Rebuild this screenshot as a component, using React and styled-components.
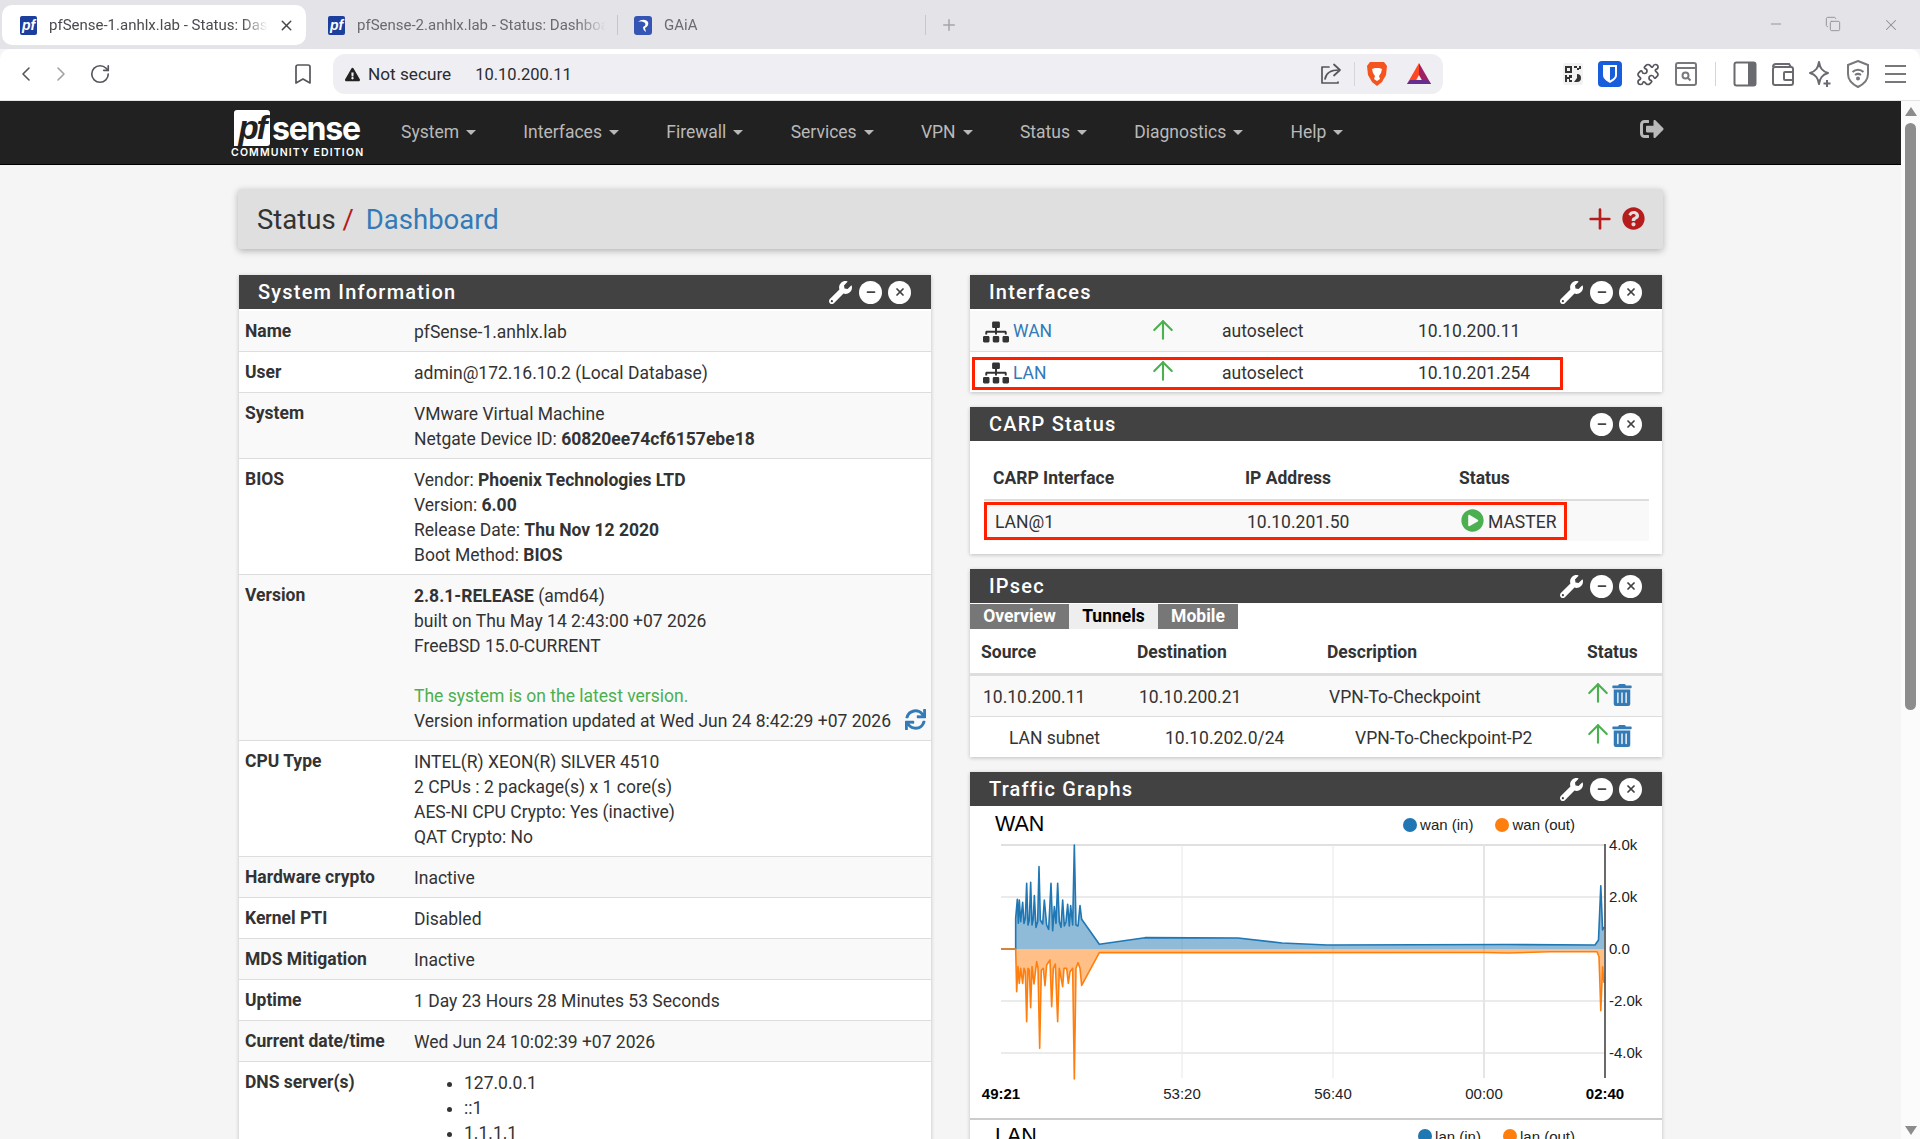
import React from 'react';
import styled, { createGlobalStyle } from 'styled-components';
import {
  ChevronLeft, ChevronRight, RotateCw, Bookmark, Puzzle, Plus, X, Minus, Copy, ArrowUp,
} from 'lucide-react';
import {
  FaWrench, FaSitemap, FaPlayCircle, FaTrashAlt, FaSync,
  FaSignOutAlt, FaQuestionCircle, FaExclamationTriangle,
} from 'react-icons/fa';

const GlobalStyle = createGlobalStyle`
  html, body {
    margin: 0;
    padding: 0;
    height: 100%;
    overflow: hidden;
    background: #f5f5f5;
  }
  * { box-sizing: border-box; }
  body {
    font-family: Roboto, "Liberation Sans", sans-serif;
    font-size: 17.5px;
    line-height: 25px;
    color: #333;
  }
`;

const Window = styled.div`
  width: 1920px;
  height: 1139px;
  display: flex;
  flex-direction: column;
  overflow: hidden;
`;

/* browser chrome */
const TabStrip = styled.div`
  height: 49px;
  flex: none;
  background: #e3e3e8;
  display: flex;
  align-items: flex-start;
  padding: 5px 0 0 2px;
  font-size: 15px;
  color: #6a6b70;
`;

const Tab = styled.div`
  width: ${(p) => p.$w}px;
  height: 40px;
  flex: none;
  display: flex;
  align-items: center;
  position: relative;
  padding-left: ${(p) => p.$pad}px;
  padding-right: ${(p) => p.$padR || 0}px;
  gap: 12px;
  background: ${(p) => (p.$active ? '#fff' : 'transparent')};
  color: ${(p) => (p.$active ? '#4a4b50' : 'inherit')};
  border-radius: ${(p) => (p.$active ? '10px' : '0')};
  &::after {
    content: '';
    display: ${(p) => (p.$sep ? 'block' : 'none')};
    position: absolute;
    right: 0;
    top: 10px;
    width: 1px;
    height: 20px;
    background: #c6c6cc;
  }
`;

const TabLabel = styled.span`
  flex: 1;
  min-width: 0;
  white-space: nowrap;
  overflow: hidden;
  -webkit-mask-image: linear-gradient(to right, #000 88%, transparent 100%);
  mask-image: linear-gradient(to right, #000 88%, transparent 100%);
`;

const Favicon = styled.span`
  width: 17px;
  height: 19px;
  flex: none;
  background: #1c3f9e;
  color: #fff;
  border-radius: 2px;
  font: italic 700 14px/18px "Liberation Sans", sans-serif;
  text-align: center;
`;

const TabClose = styled(X)`
  margin: 0 11px 0 -2px;
  flex: none;
  color: #44454a;
`;

const NewTab = styled(Plus)`
  margin-left: 14px;
  margin-top: 11px;
  color: #a5a5ab;
  flex: none;
`;

const WindowControls = styled.div`
  margin-left: auto;
  display: flex;
  gap: 41px;
  padding: 11px 20px 0 0;
  color: #8f8f94;
`;

const Toolbar = styled.div`
  height: 52px;
  flex: none;
  background: #fff;
  border-radius: 10px 10px 0 0;
  border-bottom: 1px solid #e4e4e6;
  display: flex;
  align-items: center;
  padding: 0 14px 1px 14px;
  color: #55565c;
`;

const ToolIcon = styled.span`
  display: flex;
  width: ${(p) => p.$w || 24}px;
  margin-left: ${(p) => p.$ml || 0}px;
  justify-content: center;
  color: ${(p) => p.$color || 'inherit'};
  flex: none;
`;

const UrlBar = styled.div`
  width: 1110px;
  height: 40px;
  margin-left: 18px;
  margin-right: 118px;
  background: #eeeef3;
  border-radius: 12px;
  display: flex;
  align-items: center;
  padding: 0 12px 0 12px;
  font-size: 16.5px;
  color: #2b2b30;
  flex: none;
`;

const UrlHost = styled.span`
  margin-left: 24px;
  margin-top: 1px;
`;

const SecureText = styled.span`
  margin-left: 8px;
  margin-top: 1px;
  font-size: 17.2px;
`;

const UrlActions = styled.div`
  margin-left: auto;
  display: flex;
  align-items: center;
  gap: 11px;
`;

const ToolSep = styled.span`
  width: 1px;
  height: 24px;
  background: #d6d6da;
  margin: 0 ${(p) => p.$m || 0}px;
  flex: none;
`;

const QrBox = styled.span`
  width: 20px;
  height: 22px;
  display: flex;
  align-items: center;
  justify-content: center;
  background: #f2f2f2;
  border-radius: 2px;
`;

const HamburgerLines = styled.span`
  width: 21px;
  height: 18px;
  border-top: 2px solid #77787c;
  border-bottom: 2px solid #77787c;
  position: relative;
  &::after {
    content: '';
    position: absolute;
    left: 0;
    right: 0;
    top: 6px;
    height: 2px;
    background: #77787c;
  }
`;

/* page */
const Viewport = styled.div`
  flex: 1;
  min-height: 0;
  display: flex;
`;

const Page = styled.div`
  flex: 1;
  min-width: 0;
  overflow: hidden;
  background: #f5f5f5;
`;

const ScrollTrack = styled.div`
  width: 19px;
  flex: none;
  background: #fbfbfb;
  display: flex;
  flex-direction: column;
  align-items: center;
  padding: 6px 0 4px;
`;

const ScrollThumb = styled.div`
  width: 11px;
  height: 587px;
  margin-top: 7px;
  background: #8c8c8c;
  border-radius: 6px;
`;

const ScrollArrow = styled.div`
  width: 0;
  height: 0;
  border-left: 6.5px solid transparent;
  border-right: 6.5px solid transparent;
  border-${(p) => (p.$down ? 'top' : 'bottom')}: 9px solid #8c8c8c;
  margin-top: ${(p) => (p.$down ? 'auto' : '0')};
`;

const NavBar = styled.nav`
  height: 64px;
  background: #212121;
  border-bottom: 1px solid #000;
  display: flex;
  align-items: center;
  padding: 0 237px 0 232px;
  color: #b9b9b9;
`;

const Brand = styled.div`
  width: 131px;
  height: 56px;
  flex: none;
  margin-right: 38px;
  display: flex;
  flex-direction: column;
  color: #fff;
  margin-top: 6px;
`;

const BrandTop = styled.div`
  display: flex;
  align-items: flex-end;
  height: 38px;
  padding-left: 2px;
`;

const PfBox = styled.span`
  width: 36px;
  height: 36px;
  background: #fff;
  border-radius: 3px 3px 3px 0;
  color: #212121;
  font: italic 700 33px/36px "Liberation Sans", sans-serif;
  text-align: center;
  letter-spacing: -2px;
  flex: none;
`;

const SenseWord = styled.span`
  font: 700 32px/34px Inter, "Liberation Sans", sans-serif;
  letter-spacing: -1.2px;
  margin-left: 2px;
`;

const BrandSub = styled.div`
  font: 600 10.5px/12px Inter, "Liberation Sans", sans-serif;
  letter-spacing: 1.15px;
  margin: 1px 0 0 -1px;
  white-space: nowrap;
`;

const NavList = styled.div`
  display: flex;
  gap: 47.3px;
  align-items: center;
  margin-top: -1px;
`;

const NavItem = styled.span`
  display: flex;
  align-items: center;
  gap: 6px;
  white-space: nowrap;
`;

const Caret = styled.span`
  width: 0;
  height: 0;
  margin-left: 1px;
  border-left: 5px solid transparent;
  border-right: 5px solid transparent;
  border-top: 5px solid #b9b9b9;
`;

const Logout = styled(FaSignOutAlt)`
  margin-left: auto;
  margin-bottom: 7px;
`;

const Container = styled.div`
  width: 1425px;
  margin-left: 238px;
  padding-top: 24px;
`;

const TitleBar = styled.div`
  height: 60px;
  background: #dfdfdf;
  border-radius: 3px;
  box-shadow: 0 2px 7px rgba(0, 0, 0, 0.28);
  display: flex;
  align-items: center;
  padding: 0 18px 0 19px;
  font-size: 27.5px;
  margin-bottom: 26px;
`;

const Crumb = styled.span`
  color: ${(p) => p.$color || '#333'};
  margin-right: ${(p) => p.$mr || 0}px;
`;

const TitleActions = styled.div`
  margin-left: auto;
  display: flex;
  align-items: center;
  gap: 12px;
  padding-bottom: 1px;
  color: #b71c1c;
`;

const AddIcon = styled(Plus)`
  margin: -6px;
`;

const Columns = styled.div`
  display: flex;
  justify-content: space-between;
  padding: 0 1px;
  align-items: flex-start;
`;

const Column = styled.div`
  width: 692px;
  display: flex;
  flex-direction: column;
  gap: 15px;
`;

const Panel = styled.section`
  background: #fff;
  box-shadow: 0 1px 4px rgba(0, 0, 0, 0.22);
`;

const PanelHead = styled.header`
  height: 34px;
  background: #424242;
  color: #fff;
  display: flex;
  align-items: center;
  padding: 0 20px 0 19px;
  margin-bottom: ${(p) => p.$mb ?? 2}px;
`;

const PanelTitle = styled.h2`
  margin: 0;
  font-size: 20px;
  font-weight: 500;
  letter-spacing: 1.2px;
  line-height: 34px;
`;

const PanelTools = styled.div`
  margin-left: auto;
  display: flex;
  align-items: center;
  gap: 6px;
`;

const WrenchIcon = styled(FaWrench)`
  margin-right: 1px;
`;

const ToolCircle = styled.span`
  width: 23px;
  height: 23px;
  border-radius: 50%;
  background: #fff;
  color: #424242;
  display: flex;
  align-items: center;
  justify-content: center;
`;

const InfoRow = styled.div`
  display: grid;
  grid-template-columns: 169px 1fr;
  padding: 9px 5px 6px 6px;
  border-bottom: 1px solid #ddd;
  background: ${(p) => (p.$odd ? '#f9f9f9' : '#fff')};
`;

const InfoLabel = styled.div`
  font-weight: 700;
  white-space: nowrap;
  margin-top: -1px;
`;

const UpdatedLine = styled.div`
  display: flex;
  justify-content: space-between;
  align-items: center;
  white-space: nowrap;
`;

const RefreshIcon = styled(FaSync)`
  color: #337ab7;
  margin-top: -5px;
`;

const Green = styled.div`
  color: #4caf50;
`;

const DnsList = styled.ul`
  margin: 0;
  padding-left: 50px;
`;

const IfaceRow = styled.div`
  display: grid;
  grid-template-columns: 171px 68px 196px 1fr;
  height: ${(p) => (p.$last ? 40 : 41)}px;
  align-items: center;
  padding: ${(p) => (p.$last ? 2 : 1)}px 0 0 13px;
  position: relative;
  border-bottom: ${(p) => (p.$last ? 'none' : '1px solid #ddd')};
  background: ${(p) => (p.$odd ? '#f9f9f9' : '#fff')};
`;

const IfaceName = styled.div`
  display: flex;
  align-items: center;
  gap: 4px;
  color: #337ab7;
`;

/* lucide's arrow leaves a wide margin inside its box, so it is drawn large and pulled in */
const UpArrow = styled(ArrowUp)`
  color: #4caf50;
  display: block;
  margin: -4px -6px 0;
`;

const RedMark = styled.div`
  position: absolute;
  border: 3px solid #ff2000;
  pointer-events: none;
  left: ${(p) => p.$l}px;
  top: ${(p) => p.$t}px;
  width: ${(p) => p.$w}px;
  height: ${(p) => p.$h}px;
`;

const CarpBody = styled.div`
  padding: 17px 13px 13px 14px;
`;

const CarpGrid = styled.div`
  display: grid;
  grid-template-columns: 252px 214px 1fr;
  align-items: center;
  height: ${(p) => p.$h}px;
  padding: ${(p) => (p.$head ? 0 : 2)}px 0 0 ${(p) => p.$pl}px;
  position: relative;
  font-weight: ${(p) => (p.$head ? 700 : 400)};
  border-bottom: ${(p) => (p.$head ? '2px solid #ddd' : 'none')};
  background: ${(p) => (p.$head ? '#fff' : '#f9f9f9')};
`;

const MasterCell = styled.div`
  display: flex;
  align-items: center;
  gap: 4px;
`;

const PlayIcon = styled(FaPlayCircle)`
  color: #4caf50;
  margin-top: -3px;
`;

const TabRow = styled.div`
  display: flex;
  height: 25px;
  font-weight: 700;
`;

const WidgetTab = styled.div`
  width: ${(p) => p.$w}px;
  text-align: center;
  background: ${(p) => (p.$active ? '#eee' : '#777')};
  color: ${(p) => (p.$active ? '#000' : '#fff')};
`;

const TunnelHead = styled.div`
  display: grid;
  grid-template-columns: 156px 190px 260px 1fr;
  height: 47px;
  align-items: center;
  padding: 2px 0 0 11px;
  font-weight: 700;
  border-bottom: 3px solid #ddd;
`;

const TunnelRow = styled.div`
  display: grid;
  grid-template-columns: 156px 190px 260px 1fr;
  height: ${(p) => (p.$last ? 40 : 41)}px;
  align-items: center;
  padding: 2px 0 0 ${(p) => (p.$indent ? 39 : 13)}px;
  border-bottom: ${(p) => (p.$last ? 'none' : '1px solid #ddd')};
  background: ${(p) => (p.$odd ? '#f9f9f9' : '#fff')};
`;

const StatusIcons = styled.div`
  display: flex;
  align-items: center;
  gap: 4px;
  margin-left: ${(p) => (p.$indent ? -26 : 0)}px;
  margin-top: -4px;
  color: #337ab7;
`;

const GraphHead = styled.div`
  display: flex;
  align-items: center;
  height: 32px;
  padding: ${(p) => p.$pt || 0}px 0 0 25px;
  font-family: "Liberation Sans", Arial, sans-serif;
  color: #000;
`;

const GraphName = styled.span`
  font-size: 21.5px;
`;

const Legend = styled.div`
  margin-left: auto;
  margin-right: 87px;
  display: flex;
  gap: 22px;
  font-size: 15px;
  color: #222;
`;

const LegendItem = styled.span`
  display: flex;
  align-items: center;
  gap: 3px;
  &::before {
    content: '';
    width: 14px;
    height: 14px;
    border-radius: 50%;
    background: ${(p) => p.$color};
  }
`;

const GraphSvg = styled.svg`
  display: block;
`;

const GraphDivider = styled.div`
  height: 2px;
  background: #ccc;
`;

/* hand-read from the reference, [x, y] in page pixels after scaling down the crop */
const crop = (pts) => pts.map(([x, y]) => [1000 + x / 3, 840 + y / 3]);

const blue = [
  [1001, 949], [1015.5, 949],
  ...crop([[47, 327], [47, 235], [52, 178], [55, 250], [58, 180], [62, 245], [68, 187], [72, 250], [76, 235], [80, 130], [84, 255], [88, 240], [92, 127], [96, 255], [100, 235], [103, 167], [108, 262], [113, 245], [117, 80], [121, 240], [128, 252], [133, 180], [140, 255], [146, 268], [153, 130], [158, 272], [163, 200], [168, 250], [173, 130], [178, 245], [183, 262], [188, 180], [193, 258], [198, 245], [203, 193], [208, 258], [212, 197], [218, 255], [223, 15], [228, 255], [234, 258], [240, 197], [245, 238], [298, 313], [435, 293]]),
  [1238, 938], [1282, 943], [1327, 945], [1506, 944.5], [1595, 945], [1598.5, 940], [1600.8, 885.7], [1602.6, 930], [1604, 927],
];

const orange = [
  [1001, 949], [1015.5, 949],
  ...crop([[47, 327], [50, 455], [54, 380], [58, 430], [62, 385], [68, 430], [72, 385], [76, 395], [80, 545], [84, 385], [88, 390], [92, 503], [96, 380], [102, 432], [110, 365], [114, 385], [119, 625], [124, 390], [130, 385], [135, 437], [140, 375], [150, 360], [155, 500], [160, 385], [166, 372], [173, 545], [178, 385], [188, 440], [192, 385], [200, 385], [205, 430], [210, 395], [218, 385], [223, 717], [228, 385], [234, 368], [240, 385], [245, 436], [298, 338]]),
  [1483, 952.5], [1508, 953], [1550, 951.7], [1597, 951.7], [1599, 956.7], [1600.8, 1010.7], [1602.6, 966.7], [1604, 983],
];

const toPoints = (pts) => pts.map(([x, y]) => `${x},${y}`).join(' ');
const toArea = (pts) => `M${pts[0][0]},949 ${pts.map(([x, y]) => `L${x},${y}`).join(' ')} L1604,949 Z`;

const TrafficChart = () => (
  <GraphSvg width="692" height="280" viewBox="970 838 692 280">
    {[897, 1001, 1053].map((y) => (
      <line key={y} x1="1001" x2="1605" y1={y} y2={y} stroke="#e5e5e5" strokeWidth="1.3" />
    ))}
    <line x1="1001" x2="1605" y1="845" y2="845" stroke="#e0e0e0" strokeWidth="2" />
    {[1182, 1333].map((x) => (
      <line key={x} x1={x} x2={x} y1="845" y2="1078" stroke="#e8e8e8" />
    ))}
    <line x1="1484" x2="1484" y1="845" y2="1078" stroke="#e5e5e5" strokeWidth="2" />
    <path d={toArea(blue)} fill="#1f77b4" fillOpacity="0.5" />
    <path d={toArea(orange)} fill="#ff7f0e" fillOpacity="0.5" />
    <polyline points={toPoints(blue)} fill="none" stroke="#1f77b4" strokeWidth="1.6" strokeLinejoin="round" />
    <polyline points={toPoints(orange)} fill="none" stroke="#ff7f0e" strokeWidth="1.6" strokeLinejoin="round" />
    <line x1="1605" x2="1605" y1="844" y2="1078" stroke="#444" strokeWidth="1.6" />
    <g fontFamily="Liberation Sans, Arial, sans-serif" fontSize="15" fill="#222">
      <text x="1609" y="850">4.0k</text>
      <text x="1609" y="902">2.0k</text>
      <text x="1609" y="954">0.0</text>
      <text x="1609" y="1006">-2.0k</text>
      <text x="1609" y="1058">-4.0k</text>
      <text x="1182" y="1099" textAnchor="middle">53:20</text>
      <text x="1333" y="1099" textAnchor="middle">56:40</text>
      <text x="1484" y="1099" textAnchor="middle">00:00</text>
      <text x="1001" y="1099" textAnchor="middle" fontWeight="700" fill="#000">49:21</text>
      <text x="1605" y="1099" textAnchor="middle" fontWeight="700" fill="#000">02:40</text>
    </g>
  </GraphSvg>
);

const Tools = ({ wrench = true }) => (
  <PanelTools>
    {wrench && <WrenchIcon size={23} />}
    <ToolCircle><Minus size={12} strokeWidth={3.5} /></ToolCircle>
    <ToolCircle><X size={12} strokeWidth={3.5} /></ToolCircle>
  </PanelTools>
);

const systemRows = [
  { label: 'Name', value: <div>pfSense-1.anhlx.lab</div> },
  { label: 'User', value: <div>admin@172.16.10.2 (Local Database)</div> },
  {
    label: 'System',
    value: (
      <>
        <div>VMware Virtual Machine</div>
        <div>Netgate Device ID: <strong>60820ee74cf6157ebe18</strong></div>
      </>
    ),
  },
  {
    label: 'BIOS',
    value: (
      <>
        <div>Vendor: <strong>Phoenix Technologies LTD</strong></div>
        <div>Version: <strong>6.00</strong></div>
        <div>Release Date: <strong>Thu Nov 12 2020</strong></div>
        <div>Boot Method: <strong>BIOS</strong></div>
      </>
    ),
  },
  {
    label: 'Version',
    value: (
      <>
        <div><strong>2.8.1-RELEASE</strong> (amd64)</div>
        <div>built on Thu May 14 2:43:00 +07 2026</div>
        <div>FreeBSD 15.0-CURRENT</div>
        <br />
        <Green>The system is on the latest version.</Green>
        <UpdatedLine>
          Version information updated at Wed Jun 24 8:42:29 +07 2026
          <RefreshIcon size={21} />
        </UpdatedLine>
      </>
    ),
  },
  {
    label: 'CPU Type',
    value: (
      <>
        <div>INTEL(R) XEON(R) SILVER 4510</div>
        <div>2 CPUs : 2 package(s) x 1 core(s)</div>
        <div>AES-NI CPU Crypto: Yes (inactive)</div>
        <div>QAT Crypto: No</div>
      </>
    ),
  },
  { label: 'Hardware crypto', value: <div>Inactive</div> },
  { label: 'Kernel PTI', value: <div>Disabled</div> },
  { label: 'MDS Mitigation', value: <div>Inactive</div> },
  { label: 'Uptime', value: <div>1 Day 23 Hours 28 Minutes 53 Seconds</div> },
  { label: 'Current date/time', value: <div>Wed Jun 24 10:02:39 +07 2026</div> },
  {
    label: 'DNS server(s)',
    value: (
      <DnsList>
        <li>127.0.0.1</li>
        <li>::1</li>
        <li>1.1.1.1</li>
      </DnsList>
    ),
  },
];

const navItems = ['System', 'Interfaces', 'Firewall', 'Services', 'VPN', 'Status', 'Diagnostics', 'Help'];

const GaiaIcon = () => (
  <svg width="18" height="19" viewBox="0 0 18 19">
    <rect width="18" height="19" rx="3" fill="#3555b5" />
    <path d="M4 6c3-3 8-3 10 0 1 3-1 5-3 6l1 4c-2-1-3-3-3-5 2-1 3-2 2-4-1-1-4-2-7-1z" fill="#fff" />
  </svg>
);

const ShareIcon = () => (
  <svg width="24" height="24" viewBox="0 0 24 24" fill="none" stroke="#55565c" strokeWidth="1.7" strokeLinecap="round" strokeLinejoin="round">
    <path d="M10 5H3v16h16v-1" />
    <path d="M6 17c1-6 6-9 14-9" />
    <path d="M15 2.500L21 8l-6 5.500" />
  </svg>
);

const BraveIcon = () => (
  <svg width="22" height="26" viewBox="0 0 22 26">
    <path d="M4 1h14l3 4-1 9-4 7-5 4-5-4-4-7L1 5z" fill="#f4551e" />
    <path d="M6 8l3-1h4l3 1-1 4-2 3 1 3-3 2-3-2 1-3-2-3z" fill="#fff" />
  </svg>
);

const BatIcon = () => (
  <svg width="24" height="22" viewBox="0 0 24 22">
    <path d="M12 0L0 21h7l5-9z" fill="#ff4724" />
    <path d="M12 0l12 21h-7l-5-9z" fill="#9e1f63" />
    <path d="M0 21h24l-3-4H3z" fill="#662d91" />
  </svg>
);

const QrIcon = () => (
  <svg width="16" height="16" viewBox="0 0 16 16" fill="#333">
    <path d="M0 0h7v7H0zM2 2v3h3V2zM9 0h3v2h2v2h-2V2H9zM14 0h2v3h-2zM0 9h2v2h2V9h3v3H5v2h2v2H4v-3H2v3H0zM12 8a4 4 0 0 1 4 4 4 4 0 0 1-4 4H9l3-4z" />
  </svg>
);

const BitwardenIcon = () => (
  <svg width="24" height="26" viewBox="0 0 24 26">
    <rect x="0" y="0" width="24" height="26" rx="4" fill="#175ddc" />
    <path d="M5 4h14v10c0 4-4 6-7 8-3-2-7-4-7-8z" fill="#fff" />
    <path d="M12 6h5v8c0 3-3 4-5 5.5z" fill="#175ddc" />
  </svg>
);

const TabSearchIcon = () => (
  <svg width="24" height="26" viewBox="0 0 24 26" fill="none" stroke="#77787c" strokeWidth="2">
    <rect x="2" y="2" width="20" height="22" rx="2" />
    <path d="M2 7h20" />
    <circle cx="11.5" cy="14.5" r="3" />
    <path d="M14 17l2.5 2.5" />
  </svg>
);

const SidebarIcon = () => (
  <svg width="24" height="26" viewBox="0 0 24 26">
    <rect x="1.5" y="1.5" width="21" height="23" rx="2" fill="#fff" stroke="#6a6b70" strokeWidth="2" />
    <rect x="15" y="2" width="7" height="22" fill="#6a6b70" />
  </svg>
);

const WalletIcon = () => (
  <svg width="24" height="26" viewBox="0 0 24 26" fill="none" stroke="#6a6b70" strokeWidth="2">
    <path d="M2 6a3 3 0 0 1 3-3h13l2 3" />
    <rect x="2" y="6" width="20" height="18" rx="2" />
    <rect x="13" y="11" width="9" height="8" rx="1" />
  </svg>
);

const SparkleIcon = () => (
  <svg width="24" height="28" viewBox="0 0 24 28" fill="none" stroke="#6a6b70" strokeWidth="2" strokeLinejoin="round">
    <path d="M11 2c1 6 3 9 9 11-6 2-8 5-9 11-1-6-3-9-9-11 6-2 8-5 9-11z" />
    <path d="M19 20v7M15.5 23.5h7" />
  </svg>
);

const ShieldIcon = () => (
  <svg width="22" height="28" viewBox="0 0 22 28" fill="none" stroke="#77787c" strokeWidth="2">
    <path d="M11 1l10 4v9c0 6-4 10-10 13C5 24 1 20 1 14V5z" />
    <path d="M5.5 12c3-3 8-3 11 0M8 15c2-1.500 4-1.500 6 0" />
    <circle cx="11" cy="18.500" r="1" fill="#77787c" />
  </svg>
);

const App = () => (
  <Window>
    <GlobalStyle />
    <TabStrip>
      <Tab $w={304} $pad={18} $active>
        <Favicon>pf</Favicon>
        <TabLabel>pfSense-1.anhlx.lab - Status: Dashboard</TabLabel>
        <TabClose size={17} />
      </Tab>
      <Tab $w={312} $pad={22} $padR={12} $sep>
        <Favicon>pf</Favicon>
        <TabLabel>pfSense-2.anhlx.lab - Status: Dashboard</TabLabel>
      </Tab>
      <Tab $w={308} $pad={16} $sep>
        <GaiaIcon />
        <TabLabel>GAiA</TabLabel>
      </Tab>
      <NewTab size={18} />
      <WindowControls>
        <Minus size={16} strokeWidth={1.4} />
        <Copy size={16} strokeWidth={1.4} />
        <X size={18} strokeWidth={1.4} />
      </WindowControls>
    </TabStrip>
    <Toolbar>
      <ToolIcon><ChevronLeft size={28} strokeWidth={1.6} /></ToolIcon>
      <ToolIcon $ml={11} $color="#a0a0a5"><ChevronRight size={28} strokeWidth={1.6} /></ToolIcon>
      <ToolIcon $ml={15}><RotateCw size={22} strokeWidth={1.8} /></ToolIcon>
      <ToolIcon $ml={179}><Bookmark size={24} strokeWidth={1.7} /></ToolIcon>
      <UrlBar>
        <FaExclamationTriangle size={15} color="#222" />
        <SecureText>Not secure</SecureText>
        <UrlHost>10.10.200.11</UrlHost>
        <UrlActions>
          <ShareIcon />
          <ToolSep />
          <BraveIcon />
          <ToolIcon $ml={8}><BatIcon /></ToolIcon>
        </UrlActions>
      </UrlBar>
      <ToolIcon><QrBox><QrIcon /></QrBox></ToolIcon>
      <ToolIcon $ml={13}><BitwardenIcon /></ToolIcon>
      <ToolIcon $ml={14}><Puzzle size={25} strokeWidth={1.7} /></ToolIcon>
      <ToolIcon $ml={14}><TabSearchIcon /></ToolIcon>
      <ToolSep $m={17} />
      <ToolIcon><SidebarIcon /></ToolIcon>
      <ToolIcon $ml={14}><WalletIcon /></ToolIcon>
      <ToolIcon $ml={13}><SparkleIcon /></ToolIcon>
      <ToolIcon $ml={14}><ShieldIcon /></ToolIcon>
      <ToolIcon $ml={13}><HamburgerLines /></ToolIcon>
    </Toolbar>
    <Viewport>
      <Page>
        <NavBar>
          <Brand>
            <BrandTop>
              <PfBox>pf</PfBox>
              <SenseWord>sense</SenseWord>
            </BrandTop>
            <BrandSub>COMMUNITY EDITION</BrandSub>
          </Brand>
          <NavList>
            {navItems.map((item) => (
              <NavItem key={item}>{item}<Caret /></NavItem>
            ))}
          </NavList>
          <Logout size={24} />
        </NavBar>
        <Container>
          <TitleBar>
            <Crumb>Status</Crumb>
            <Crumb $color="#b71c1c" $mr={12}>&nbsp;/</Crumb>
            <Crumb $color="#337ab7">Dashboard</Crumb>
            <TitleActions>
              <AddIcon size={32} strokeWidth={2} />
              <FaQuestionCircle size={23} />
            </TitleActions>
          </TitleBar>
          <Columns>
            <Column>
              <Panel>
                <PanelHead>
                  <PanelTitle>System Information</PanelTitle>
                  <Tools />
                </PanelHead>
                {systemRows.map((row, i) => (
                  <InfoRow key={row.label} $odd={i % 2 === 0}>
                    <InfoLabel>{row.label}</InfoLabel>
                    <div>{row.value}</div>
                  </InfoRow>
                ))}
              </Panel>
            </Column>
            <Column>
              <Panel>
                <PanelHead>
                  <PanelTitle>Interfaces</PanelTitle>
                  <Tools />
                </PanelHead>
                <IfaceRow $odd>
                  <IfaceName><FaSitemap size={26} color="#333" />WAN</IfaceName>
                  <UpArrow size={30} strokeWidth={1.7} />
                  <div>autoselect</div>
                  <div>10.10.200.11</div>
                </IfaceRow>
                <IfaceRow $last>
                  <IfaceName><FaSitemap size={26} color="#333" />LAN</IfaceName>
                  <UpArrow size={30} strokeWidth={1.7} />
                  <div>autoselect</div>
                  <div>10.10.201.254</div>
                  <RedMark $l={2} $t={5} $w={591} $h={33} />
                </IfaceRow>
              </Panel>
              <Panel>
                <PanelHead $mb={0}>
                  <PanelTitle>CARP Status</PanelTitle>
                  <Tools wrench={false} />
                </PanelHead>
                <CarpBody>
                  <CarpGrid $head $h={43} $pl={9}>
                    <div>CARP Interface</div>
                    <div>IP Address</div>
                    <div>Status</div>
                  </CarpGrid>
                  <CarpGrid $h={40} $pl={11}>
                    <div>LAN@1</div>
                    <div>10.10.201.50</div>
                    <MasterCell><PlayIcon size={23} />MASTER</MasterCell>
                    <RedMark $l={0} $t={1} $w={583} $h={38} />
                  </CarpGrid>
                </CarpBody>
              </Panel>
              <Panel>
                <PanelHead $mb={1}>
                  <PanelTitle>IPsec</PanelTitle>
                  <Tools />
                </PanelHead>
                <TabRow>
                  <WidgetTab $w={99}>Overview</WidgetTab>
                  <WidgetTab $w={89} $active>Tunnels</WidgetTab>
                  <WidgetTab $w={80}>Mobile</WidgetTab>
                </TabRow>
                <TunnelHead>
                  <div>Source</div>
                  <div>Destination</div>
                  <div>Description</div>
                  <div>Status</div>
                </TunnelHead>
                <TunnelRow $odd>
                  <div>10.10.200.11</div>
                  <div>10.10.200.21</div>
                  <div>VPN-To-Checkpoint</div>
                  <StatusIcons>
                    <UpArrow size={30} strokeWidth={1.7} />
                    <FaTrashAlt size={22} />
                  </StatusIcons>
                </TunnelRow>
                <TunnelRow $indent $last>
                  <div>LAN subnet</div>
                  <div>10.10.202.0/24</div>
                  <div>VPN-To-Checkpoint-P2</div>
                  <StatusIcons $indent>
                    <UpArrow size={30} strokeWidth={1.7} />
                    <FaTrashAlt size={22} />
                  </StatusIcons>
                </TunnelRow>
              </Panel>
              <Panel>
                <PanelHead $mb={0}>
                  <PanelTitle>Traffic Graphs</PanelTitle>
                  <Tools />
                </PanelHead>
                <GraphHead $pt={5}>
                  <GraphName>WAN</GraphName>
                  <Legend>
                    <LegendItem $color="#1f77b4">wan (in)</LegendItem>
                    <LegendItem $color="#ff7f0e">wan (out)</LegendItem>
                  </Legend>
                </GraphHead>
                <TrafficChart />
                <GraphDivider />
                <GraphHead>
                  <GraphName>LAN</GraphName>
                  <Legend>
                    <LegendItem $color="#1f77b4">lan (in)</LegendItem>
                    <LegendItem $color="#ff7f0e">lan (out)</LegendItem>
                  </Legend>
                </GraphHead>
              </Panel>
            </Column>
          </Columns>
        </Container>
      </Page>
      <ScrollTrack>
        <ScrollArrow />
        <ScrollThumb />
        <ScrollArrow $down />
      </ScrollTrack>
    </Viewport>
  </Window>
);

export default App;
